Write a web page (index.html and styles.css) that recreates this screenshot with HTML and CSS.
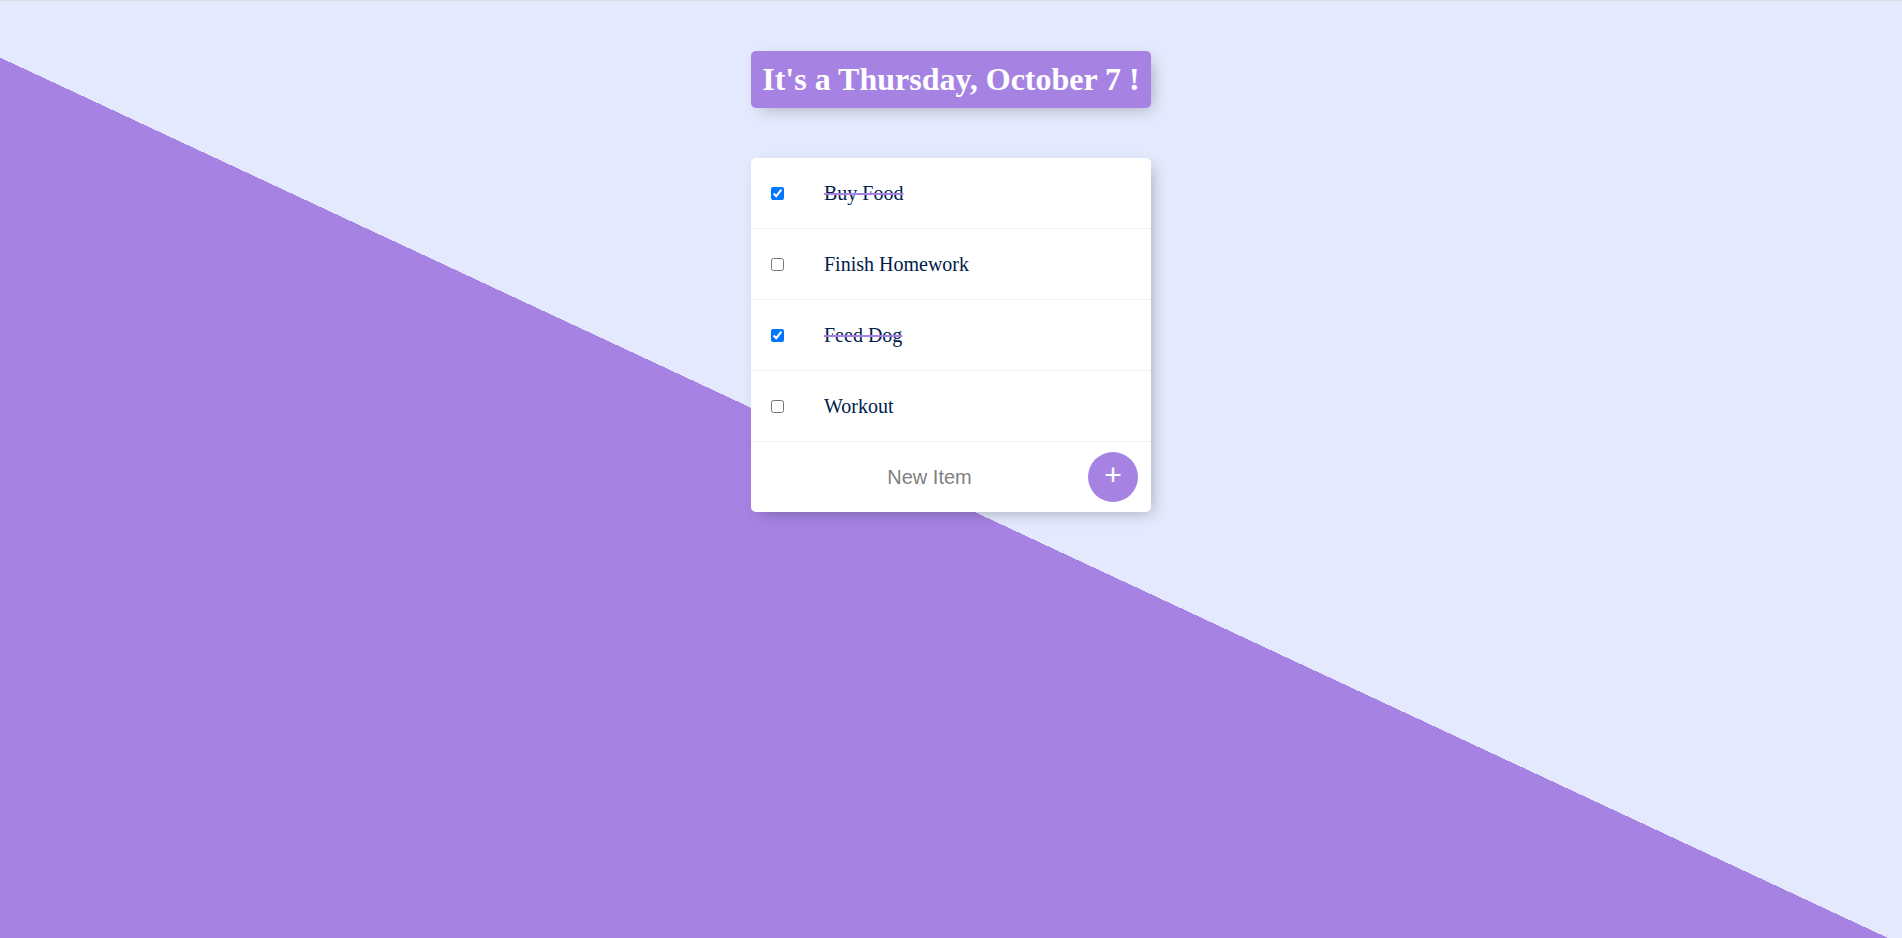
FILE: index.html
```html
<!DOCTYPE html>
<html lang="en">
<head>
<meta charset="utf-8">
<title>To-Do List</title>
<link rel="stylesheet" href="styles.css">
</head>
<body>
  <div class="box heading">
    <h1 class="title">It's a Thursday, October 7 !</h1>
  </div>
  <div class="box">
    <div class="item">
      <input class="check" type="checkbox" checked>
      <p class="text">Buy Food</p>
    </div>
    <div class="item">
      <input class="check" type="checkbox">
      <p class="text">Finish Homework</p>
    </div>
    <div class="item">
      <input class="check" type="checkbox" checked>
      <p class="text">Feed Dog</p>
    </div>
    <div class="item">
      <input class="check" type="checkbox">
      <p class="text">Workout</p>
    </div>
    <form class="item form">
      <input class="new-item" type="text" name="newItem" placeholder="New Item" autocomplete="off">
      <button class="add" type="button">+</button>
    </form>
  </div>
</body>
</html>
```

FILE: styles.css
```css
html {
  background-color: #E4E9FD;
  background-image: linear-gradient(25deg, #A683E3 50%, #E4E9FD 50%);
  min-height: 1000px;
  border-top: 1px solid #dadce4;
  font-family: "Liberation Serif", "Times New Roman", serif;
}

body {
  margin: 0 8px;
}

.title {
  color: #fff;
  padding: 10px;
  margin: 0;
  font-size: 32px;
  font-weight: bold;
}

.box {
  max-width: 400px;
  margin: 50px auto;
  background: white;
  border-radius: 5px;
  box-shadow: 5px 5px 15px -5px rgba(0, 0, 0, 0.3);
}

.heading {
  background-color: #A683E3;
  text-align: center;
}

.item {
  min-height: 70px;
  display: flex;
  align-items: center;
  border-bottom: 1px solid #F1F1F1;
}

.item:last-child {
  border-bottom: 0;
}

.check {
  margin: 20px;
  width: 13px;
  height: 13px;
  flex: none;
}

.check:checked + .text {
  text-decoration: line-through;
  text-decoration-color: #A683E3;
}

.text {
  margin: 0;
  padding: 20px;
  font-size: 20px;
  font-weight: 200;
  color: #00204a;
}

.form {
  text-align: center;
  margin-left: 20px;
}

.add {
  min-height: 50px;
  width: 50px;
  border-radius: 50%;
  border-color: transparent;
  background-color: #A683E3;
  color: #fff;
  font-family: "Liberation Sans", Arial, sans-serif;
  font-size: 30px;
  padding: 1px 6px 6px;
  border-width: 0;
  flex: none;
}

.new-item {
  text-align: center;
  height: 60px;
  padding: 1px 2px;
  border: none;
  background: transparent;
  font-family: "Liberation Sans", Arial, sans-serif;
  font-size: 20px;
  font-weight: 200;
  width: 313px;
  flex: none;
}

.new-item:focus {
  outline: none;
  box-shadow: inset 0 -3px 0 0 #A683E3;
}

.new-item::placeholder {
  color: grey;
  opacity: 1;
}
```
